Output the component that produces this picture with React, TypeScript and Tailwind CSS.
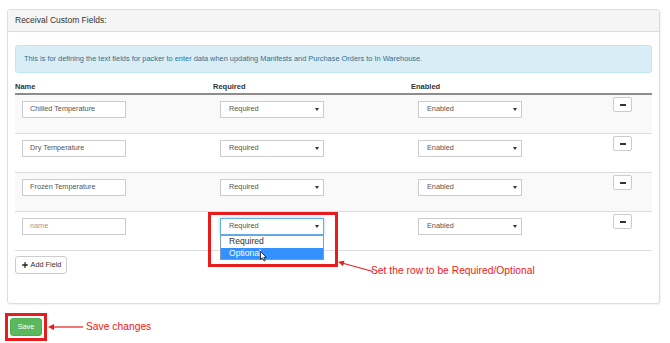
import { Plus } from "lucide-react";

type Row = { name: string; placeholder?: boolean; striped: boolean; open?: boolean };

const rows: Row[] = [
	{ name: "Chilled Temperature", striped: true },
	{ name: "Dry Temperature", striped: false },
	{ name: "Frozen Temperature", striped: true },
	{ name: "name", placeholder: true, striped: false, open: true },
];

function Caret() {
	return (
		<svg width="4" height="3" viewBox="0 0 4 3">
			<path d="M0 0 L4 0 L2 3 Z" fill="#333" />
		</svg>
	);
}

function FakeSelect({ value, focused }: { value: string; focused?: boolean }) {
	return (
		<div
			className={
				focused
					? "flex h-[17px] w-[104px] items-center justify-between border border-[#66afe9] bg-white pl-[8px] pr-[4px] text-[7.3px] text-[#555] shadow-[0_0_3px_rgba(102,175,233,0.6)]"
					: "flex h-[17px] w-[104px] items-center justify-between border border-[#ccc] bg-white pl-[8px] pr-[4px] text-[7.3px] text-[#555]"
			}
		>
			<span>{value}</span>
			<Caret />
		</div>
	);
}

function FieldRow({ row }: { row: Row }) {
	return (
		<div
			className={
				row.striped
					? "grid h-[39px] grid-cols-[198px_198px_195px_1fr] border-b border-[#ddd] bg-[#f9f9f9]"
					: "grid h-[39px] grid-cols-[198px_198px_195px_1fr] border-b border-[#ddd] bg-white"
			}
		>
			<div className="pl-[7px] pt-[6px]">
				<div
					className={
						row.placeholder
							? "flex h-[17px] w-[104px] items-center border border-[#ccc] bg-white px-[7px] text-[7.3px] text-[#999]"
							: "flex h-[17px] w-[104px] items-center border border-[#ccc] bg-white px-[7px] text-[7.3px] text-[#555]"
					}
				>
					{row.name}
				</div>
			</div>
			<div className="relative pl-[7px] pt-[6px]">
				<FakeSelect value="Required" focused={row.open} />
				{row.open && (
					<div className="absolute left-[7px] top-[23px] z-10 w-[104px] border border-[#7a9cc6] bg-white text-[8.6px] leading-[11.5px]">
						<div className="pl-[8px] text-[#333]">Required</div>
						<div className="relative bg-[#3390ff] pl-[8px] text-white">
							Optional
							<svg className="absolute left-[39px] top-[3px]" width="7" height="11" viewBox="0 0 7 11">
								<path d="M0.5 0.5 L0.5 8.5 L2.5 6.8 L4 10 L5.3 9.4 L3.9 6.3 L6.3 6.3 Z" fill="#fff" stroke="#111" strokeWidth="0.8" />
							</svg>
						</div>
					</div>
				)}
			</div>
			<div className="pl-[7px] pt-[6px]">
				<FakeSelect value="Enabled" />
			</div>
			<div className="pl-[7px] pt-[2px]">
				<button className="flex h-[15px] w-[19px] items-center justify-center rounded-[2px] border border-[#ccc] bg-white">
					<span className="block h-[2px] w-[6px] bg-[#333]" />
				</button>
			</div>
		</div>
	);
}

export default function App() {
	return (
		<div className="relative h-[343px] w-[670px] overflow-hidden bg-white font-['Liberation_Sans',Arial,sans-serif]">
			<div className="ml-[7px] mt-[9px] w-[653px] rounded-[3px] border border-[#ddd] bg-white shadow-[1px_1px_1px_rgba(0,0,0,0.05)]">
				<div className="flex h-[22px] items-center border-b border-[#ddd] bg-[#f5f5f5] px-[7px] text-[8.5px] text-[#333]">
					Receival Custom Fields:
				</div>
				<div className="px-[7px] pb-[29px] pt-[13px]">
					<div className="flex h-[28px] items-center rounded-[3px] border border-[#bce8f1] bg-[#d9edf7] px-[8px] text-[7.4px] text-[#31708f]">
						This is for defining the text fields for packer to enter data when updating Manifests and Purchase Orders to In Warehouse.
					</div>
					<div className="mt-[7px] grid h-[15px] grid-cols-[198px_198px_195px_1fr] items-end border-b-2 border-[#8c8c8c] pb-[1px] text-[7.5px] font-bold leading-[11px] text-[#333]">
						<div>Name</div>
						<div>Required</div>
						<div>Enabled</div>
						<div />
					</div>
					{rows.map((row) => (
						<FieldRow key={row.name} row={row} />
					))}
					<button className="mt-[5px] flex h-[18px] w-[52px] items-center justify-center gap-[2px] rounded-[3px] border border-[#ccc] bg-white text-[7.3px] text-[#333]">
						<Plus size={8} strokeWidth={4} color="#222" />
						Add Field
					</button>
				</div>
			</div>

			<div className="ml-[5px] mt-[9px] flex items-center">
				<div className="border-[3px] border-[#e81c1c] p-[2px]">
					<button className="flex h-[18px] w-[32px] items-center justify-center rounded-[3px] border border-[#4cae4c] bg-[#5cb85c] text-[7.3px] text-white">
						Save
					</button>
				</div>
				<svg className="ml-[1px]" width="36" height="8" viewBox="0 0 36 8">
					<path d="M35 4 L3 4" stroke="#e81c1c" strokeWidth="1.2" />
					<path d="M0 4 L6 1 L6 7 Z" fill="#e81c1c" />
				</svg>
				<span className="ml-[2px] text-[10.3px] text-[#f01818]">Save changes</span>
			</div>

			{/* annotation over the dropdown */}
			<div className="pointer-events-none absolute left-[208px] top-[212px] h-[55px] w-[130px] border-[3px] border-[#e81c1c]" />
			<svg className="pointer-events-none absolute left-[337px] top-[258px]" width="38" height="16" viewBox="0 0 38 16">
				<path d="M36 13.5 L5 5" stroke="#e81c1c" strokeWidth="1.2" />
				<path d="M1 3.8 L7.5 2.7 L6 8.3 Z" fill="#e81c1c" />
			</svg>
			<span className="absolute left-[371px] top-[264px] text-[10.3px] leading-[13px] text-[#f01818]">
				Set the row to be Required/Optional
			</span>
		</div>
	);
}
